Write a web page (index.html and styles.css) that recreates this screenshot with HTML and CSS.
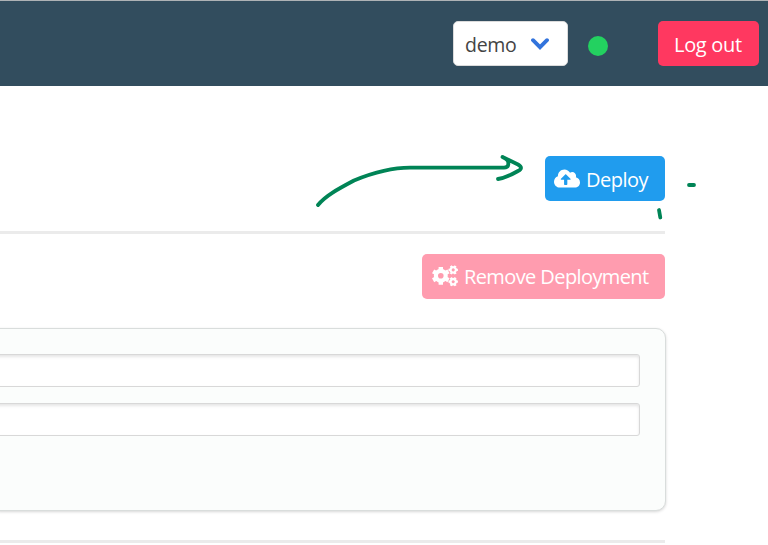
FILE: index.html
```html
<!DOCTYPE html>
<html lang="en">
<head>
<meta charset="utf-8">
<title>Deployment</title>
<link rel="stylesheet" href="styles.css">
</head>
<body>
<header class="navbar">
  <div class="select"><span class="select-label">demo</span>
    <svg class="chevron" width="18" height="12" viewBox="0 0 18 12"><path d="M2 2.2 9 9.2 16 2.2"/></svg>
  </div>
  <span class="status"></span>
  <button class="button logout"><span class="logout-label">Log out</span></button>
</header>
<main class="content">
  <button class="button deploy">
    <svg class="icon" width="26" height="21" viewBox="0 0 640 512"><path d="M537.6 226.6c4.1-10.7 6.4-22.4 6.4-34.6 0-53-43-96-96-96-19.7 0-38.1 6-53.3 16.2C367 64.2 315.3 32 256 32c-88.4 0-160 71.6-160 160 0 2.7.1 5.4.2 8.1C40.2 219.8 0 273.2 0 336c0 79.5 64.5 144 144 144h368c70.7 0 128-57.3 128-128 0-61.9-44-113.6-102.4-125.4zM393.4 288H328v112c0 8.8-7.2 16-16 16h-48c-8.8 0-16-7.2-16-16V288h-65.4c-14.3 0-21.4-17.2-11.3-27.3l105.4-105.4c6.2-6.2 16.4-6.2 22.6 0l105.4 105.4c10.1 10.1 2.9 27.3-11.3 27.3z"/></svg>
    <span class="deploy-label">Deploy</span>
  </button>
  <hr class="divider">
  <button class="button remove">
    <svg class="icon gears" width="26" height="22" viewBox="0 0 26 22">
      <defs>
        <g id="gear">
          <circle r="4.9" stroke-width="4.2"/>
          <path stroke-width="4.4" d="M0-5.800V-8.900M5-2.900 7.700-4.450M5 2.900 7.700 4.450M0 5.800V8.900M-5 2.900-7.700 4.450M-5-2.900-7.700-4.450"/>
        </g>
      </defs>
      <use href="#gear" transform="translate(8.800 10.800)"/>
      <use href="#gear" transform="translate(21.200 4.900) rotate(30) scale(.53)"/>
      <use href="#gear" transform="translate(21.200 16.700) rotate(30) scale(.53)"/>
    </svg>
    <span class="remove-label">Remove Deployment</span>
  </button>
  <section class="panel">
    <input class="field" type="text" aria-label="First value">
    <input class="field" type="text" aria-label="Second value">
  </section>
  <hr class="divider">
</main>
<svg class="annotation" width="768" height="545" viewBox="0 0 768 545">
  <path d="M318 205C325 196 338 189 354 180.500C370 174 392 167.700 410 167.700H504Q508 167.700 508.300 164.500C508.500 161 508 159.500 502.500 157L518 164.500Q524 168 518 171C511 175 505 178 498 179"/>
  <path d="M689 185H694M659 210 660.300 217.500"/>
</svg>
</body>
</html>
```
FILE: styles.css
```css
* { box-sizing: border-box; }
body {
  margin: 0;
  height: 545px;
  overflow: hidden;
  background: #fff;
  font: 20px/30px "Open Sans", "Noto Sans", sans-serif;
}
.navbar {
  display: flex;
  align-items: flex-start;
  justify-content: flex-end;
  height: 86px;
  padding: 20px 9px 0 0;
  border-top: 1px solid #aeb2b5;
  background: #324d5e;
}
.select {
  display: flex;
  align-items: center;
  width: 115px;
  height: 45px;
  padding-left: 11px;
  border: 1px solid #dbdbdb;
  border-radius: 5px;
  background: #fff;
  color: #444;
}
.select-label { width: 66px; padding-top: 2px; font-size: 19.5px; letter-spacing: -.3px; }
.chevron { fill: none; stroke: #3273dc; stroke-width: 3.8; stroke-linecap: round; }
.status {
  width: 20px;
  height: 20px;
  margin: 15px 50px 0 20px;
  border-radius: 50%;
  background: #23d160;
}
.button {
  display: flex;
  align-items: center;
  height: 45px;
  padding: 0;
  border: 0;
  border-radius: 5px;
  color: #fff;
  font: inherit;
  white-space: nowrap;
}
.logout { width: 101px; padding: 2px 0 0 16px; background: #ff3860; letter-spacing: -.3px; }
.content {
  display: flex;
  flex-direction: column;
  align-items: flex-end;
  width: 666px;
  padding-top: 70px;
}
.deploy { width: 120px; margin-right: 1px; padding: 2px 0 0 9px; background: #209cee; letter-spacing: -.5px; }
.remove { width: 243px; margin-right: 1px; padding: 1px 0 0 10px; background: #ff9caf; letter-spacing: -.6px; }
.icon { flex: none; margin-right: 6px; fill: #fff; }
.deploy .icon { margin-top: -3px; }
.gears { fill: none; stroke: #fff; margin-top: -3px; }
.divider {
  width: 665px;
  height: 3px;
  margin: 30px 1px 20px 0;
  border: 0;
  background: #ebebeb;
}
.panel {
  display: flex;
  flex-direction: column;
  gap: 16px;
  width: 676px;
  height: 183px;
  margin-top: 29px;
  padding: 25px 25px 0 0;
  border: 1px solid #d9dddc;
  border-radius: 10px;
  background: #fbfdfc;
  box-shadow: 0 1px 3px rgba(0, 0, 0, .16);
}
.field {
  width: 100%;
  height: 33px;
  border: 1px solid #d8d8d8;
  border-radius: 3px;
  background: #fff;
  box-shadow: inset 0 2px 3px rgba(0, 0, 0, .1);
}
.panel + .divider { margin: 29px 1px 0 0; }
.annotation {
  position: absolute;
  inset: 0;
  pointer-events: none;
  fill: none;
  stroke: #008456;
  stroke-width: 3.8;
  stroke-linecap: round;
  stroke-linejoin: round;
}
```
